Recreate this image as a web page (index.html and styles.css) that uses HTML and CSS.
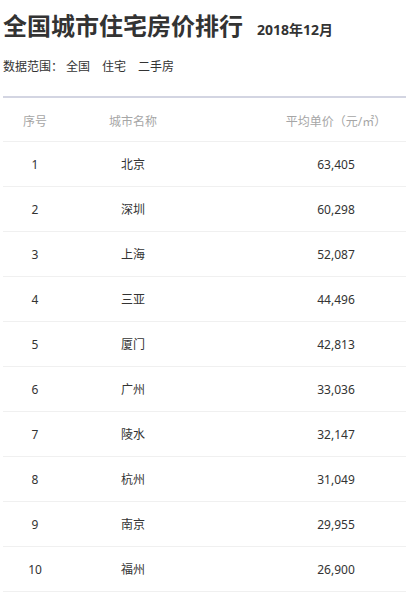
FILE: index.html
```html
<!DOCTYPE html>
<html lang="zh-CN">
<head>
<meta charset="utf-8">
<title>全国城市住宅房价排行</title>
<link rel="stylesheet" href="styles.css">
</head>
<body>
<div class="page">
  <header class="head">
    <h1 class="title">全国城市住宅房价排行<span class="date">2018年12月</span></h1>
    <p class="scope"><span class="label">数据范围：</span><span class="tag">全国</span><span class="tag">住宅</span><span class="tag">二手房</span></p>
  </header>
  <div class="table">
    <div class="row hrow"><div class="c1">序号</div><div class="c2">城市名称</div><div class="c3">平均单价（元/㎡）</div></div>
    <div class="row"><div class="c1">1</div><div class="c2">北京</div><div class="c3">63,405</div></div>
    <div class="row"><div class="c1">2</div><div class="c2">深圳</div><div class="c3">60,298</div></div>
    <div class="row"><div class="c1">3</div><div class="c2">上海</div><div class="c3">52,087</div></div>
    <div class="row"><div class="c1">4</div><div class="c2">三亚</div><div class="c3">44,496</div></div>
    <div class="row"><div class="c1">5</div><div class="c2">厦门</div><div class="c3">42,813</div></div>
    <div class="row"><div class="c1">6</div><div class="c2">广州</div><div class="c3">33,036</div></div>
    <div class="row"><div class="c1">7</div><div class="c2">陵水</div><div class="c3">32,147</div></div>
    <div class="row"><div class="c1">8</div><div class="c2">杭州</div><div class="c3">31,049</div></div>
    <div class="row"><div class="c1">9</div><div class="c2">南京</div><div class="c3">29,955</div></div>
    <div class="row"><div class="c1">10</div><div class="c2">福州</div><div class="c3">26,900</div></div>
  </div>
</div>
</body>
</html>
```
FILE: styles.css
```css
html, body {
  margin: 0;
  padding: 0;
  background: #fff;
}
body {
  font-family: "Noto Sans", "Noto Sans CJK SC", sans-serif;
  color: #333;
}
.page {
  padding: 0 0 0 3px;
}
.head {
  padding-top: 11px;
  height: 98px;
  box-sizing: border-box;
  border-bottom: 2px solid #d3d5e2;
}
.title {
  margin: 0;
  font-size: 24px;
  line-height: 30px;
  font-weight: 700;
  color: #333;
  display: flex;
  align-items: baseline;
}
.date {
  font-size: 14px;
  margin-left: 14px;
  font-weight: 700;
}
.scope {
  margin: 14px 0 0;
  font-size: 12px;
  line-height: 16px;
  color: #333;
}
.label {
  margin-right: 3px;
}
.tag {
  margin-right: 12px;
}
.table {
  font-size: 12px;
}
.row {
  display: grid;
  grid-template-columns: 64px 132px 1fr;
  height: 45px;
  box-sizing: border-box;
  border-bottom: 1px solid #f0f0f0;
  align-items: center;
  text-align: center;
  color: #333;
}
.hrow {
  height: 44px;
  padding-top: 3px;
  color: #a6a6a6;
}
.c3 {
  padding-left: 67px;
}
```
